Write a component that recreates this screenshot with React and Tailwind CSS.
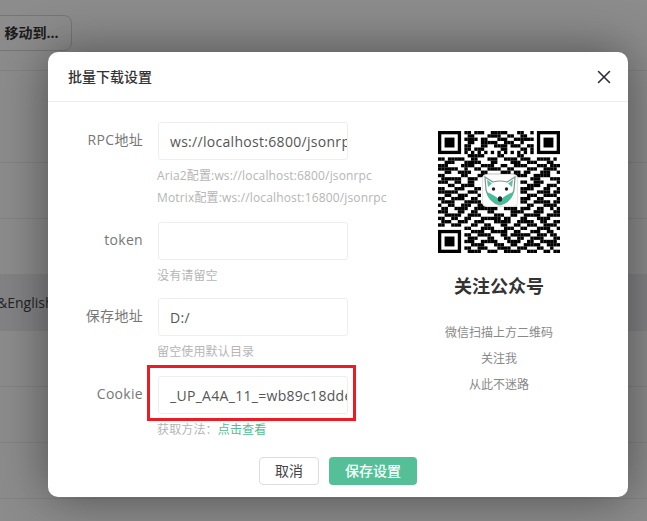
import React from 'react';
import { X } from 'lucide-react';

const FONT = '"Open Sans", "Noto Sans CJK SC", sans-serif';

const QR_ROWS = [
  "0000000011011100111110001100100000000",
  "0000000001100001111001100110000000000",
  "0000000011110110001110011111100000000",
  "0000000001100111110011100100000000000",
  "0000000011000110011110111001100000000",
  "0000000011011100000110000110100000000",
  "0000000010101010101010101010100000000",
  "0000000001111100001100001100000000000",
  "1101111100110001110011110111001111010",
  "0011100011111000110000111001110001100",
  "1110000111100111100110011110001110111",
  "1111110010011001111001100001110011110",
  "0011001111000110000111011011000111001",
  "1100000110001111111000111110011111000",
  "0111111001110011001101100000111000111",
  "1110011001100000000000000110011100001",
  "0001100111100000000000000001111001110",
  "1100011100011000000000000111100011001",
  "1111110001110000000000000110001111011",
  "0011001110001000000000000001110011110",
  "1100111100110000000000000111001100001",
  "0111100011111000000000000110011111011",
  "1001100111001110001111000001100011110",
  "0110011110011111110011110111001100101",
  "1110001100110001100000111100011100011",
  "0011111001111000011100110011111001111",
  "1100110011000111111011000110001111000",
  "0111001110011100011111001111100110011",
  "1100111000110011000110011001110011110",
  "0000000011000111100011100110001111001",
  "0000000000111100111110011000111001100",
  "0000000011001111000110111111001110110",
  "0000000001110001100011001100111100011",
  "0000000011100111110001111001100111110",
  "0000000000111100011100110011111001111",
  "0000000011001110001111001110001100100",
  "0000000001111001110011111001110011011",
];

function Finder({ x, y }) {
  return (
    <g>
      <rect x={x} y={y} width="7" height="7" fill="#000" />
      <rect x={x + 1} y={y + 1} width="5" height="5" fill="#fff" />
      <rect x={x + 2} y={y + 2} width="3" height="3" fill="#000" />
    </g>
  );
}

function QrCode() {
  return (
    <div className="relative w-[122px] h-[122px]">
      <svg viewBox="0 0 37 37" className="w-full h-full blur-[0.3px]">
        {QR_ROWS.map((row, r) =>
          row.split('').map((c, i) =>
            c === '1' ? <rect key={r + '-' + i} x={i} y={r} width="1.02" height="1.02" fill="#000" /> : null
          )
        )}
        <Finder x={0} y={0} />
        <Finder x={30} y={0} />
        <Finder x={0} y={30} />
      </svg>
      {/* fox logo on top of the code */}
      <svg viewBox="0 0 36 33" className="absolute left-[44px] top-[43px] w-[36px] h-[33px]">
        <rect x="0.5" y="0.5" width="35" height="32" rx="4" fill="#fbfbfb" stroke="#e2e2e2" />
        <path d="M3 3 L11 8 Q18 6 25 8 L33 3 L32 16 Q29 28 18 31 Q7 28 4 16 Z" fill="#fff" stroke="#7f9a92" strokeWidth="1.2" />
        <path d="M5 5.5 L10 9.5 L6 13 Z M31 5.5 L26 9.5 L30 13 Z" fill="#5cc4a4" />
        <path d="M4.5 18 Q11 20 18 26 Q25 20 31.5 18 Q29 28 18 31 Q7 28 4.5 18 Z" fill="#45bf9b" />
        <circle cx="11.5" cy="15" r="1.7" fill="#222" />
        <circle cx="24.5" cy="15" r="1.7" fill="#222" />
        <ellipse cx="18" cy="25" rx="2.2" ry="2.8" fill="#222" />
      </svg>
    </div>
  );
}

function Hint({ children }) {
  return <div className="text-xs leading-[22px] tracking-[0.15px] text-[#b5b5b5] whitespace-nowrap">{children}</div>;
}

function FormRow({ label, value, className, children }) {
  return (
    <div className={className}>
      <div className="flex items-center">
        <label className="w-[110px] pr-[15px] pb-[2px] text-right text-sm tracking-[0.3px] text-[#777] whitespace-nowrap">{label}</label>
        <input
          readOnly
          value={value}
          className="w-[190px] h-[38px] pl-[11px] border border-[#eeeeee] rounded-[3px] text-sm tracking-[0.3px] text-[#555] outline-none"
        />
      </div>
      <div className="ml-[109px] mt-[5px]">{children}</div>
    </div>
  );
}

function BackgroundPage() {
  return (
    <div className="h-[521px] overflow-hidden bg-white">
      <div className="h-[71px] pt-[15px] border-b border-[#eeeeee]">
        <button className="-ml-[10px] w-[82px] h-[36px] pl-[1px] border border-[#d8d8d8] rounded-lg text-sm font-bold text-[#333]">
          移动到...
        </button>
      </div>
      <div className="h-[92px] border-b border-[#eeeeee]" />
      <div className="h-[56px] border-b border-[#eeeeee]" />
      <div className="h-[56px] border-b border-[#eeeeee]" />
      <div className="h-[56px] bg-[#eeeef4] flex items-center text-sm text-[#444] border-b border-[#eeeeee]">
        <span className="-ml-[3px]">&amp;English</span>
      </div>
      <div className="h-[56px] border-b border-[#eeeeee]" />
      <div className="h-[56px] border-b border-[#eeeeee]" />
      <div className="h-[56px] border-b border-[#eeeeee]" />
    </div>
  );
}

export default function App() {
  return (
    <div className="relative w-[647px] h-[521px] overflow-hidden" style={{ fontFamily: FONT }}>
      <BackgroundPage />
      <div className="absolute inset-0 bg-black/45" />

      <div className="absolute left-[48px] top-[52px] w-[580px] h-[445px] bg-white rounded-[10px] shadow-[0_0_50px_rgba(0,0,0,0.45)]">
        <div className="h-[50px] flex items-center justify-between pl-[20px] pr-[13px] border-b border-[#eeeeee]">
          <span className="text-[14px] font-medium text-[#333]">批量下载设置</span>
          <X size={22} strokeWidth={1.7} className="text-[#2c2c3c]" />
        </div>

        <div className="flex pt-[20px]">
          <div className="w-[347px] shrink-0">
            <FormRow label="RPC地址" value="ws://localhost:6800/jsonrpc" className="mb-[13px]">
              <Hint>Aria2配置:ws://localhost:6800/jsonrpc</Hint>
              <Hint>Motrix配置:ws://localhost:16800/jsonrpc</Hint>
            </FormRow>
            <FormRow label="token" value="" className="mb-[11px]">
              <Hint>没有请留空</Hint>
            </FormRow>
            <FormRow label="保存地址" value="D:/" className="mb-[13px]">
              <Hint>留空使用默认目录</Hint>
            </FormRow>
            <FormRow label="Cookie" value="_UP_A4A_11_=wb89c18dde4a7f3b2c1d9e6f0a">
              <Hint>
                获取方法：<span className="text-[#52bd94]">点击查看</span>
              </Hint>
            </FormRow>
          </div>

          <div className="flex-1 pt-[9px] flex flex-col items-center pr-[25px]">
            <QrCode />
            <div className="mt-[20px] text-lg leading-[27px] font-bold text-[#333]">关注公众号</div>
            <div className="mt-[20px] flex flex-col items-center text-xs leading-[26px] text-[#888]">
              <span>微信扫描上方二维码</span>
              <span>关注我</span>
              <span>从此不迷路</span>
            </div>
          </div>
        </div>

        <div className="absolute left-[211px] top-[405px] flex gap-[10px]">
          <button className="w-[60px] h-[28px] border border-[#dddddd] rounded-[4px] text-sm text-[#444]">取消</button>
          <button className="w-[88px] h-[28px] rounded-[4px] bg-[#55bf98] text-sm font-medium text-white">保存设置</button>
        </div>
      </div>

      {/* red annotation box */}
      <div className="absolute left-[147px] top-[365px] w-[209px] h-[56px] border-[3px] border-[#ed1c24]" />
    </div>
  );
}
